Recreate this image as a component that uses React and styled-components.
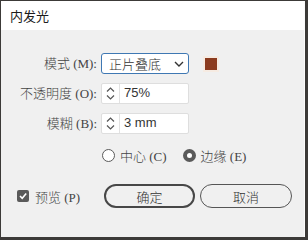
import styled, { createGlobalStyle } from 'styled-components';

const GlobalStyle = createGlobalStyle`
  html, body {
    margin: 0;
    padding: 0;
    background: #3c3a38;
  }
  body {
    width: 308px;
    height: 240px;
    overflow: hidden;
    font-family: "Liberation Serif", "Noto Sans CJK SC", serif;
    font-weight: 300;
  }
`;

const Dialog = styled.div`
  margin: 1px 0 0 1px;
  width: 304px;
  height: 236px;
  box-sizing: border-box;
  background: #f0f0f0;
  border-right: 1px solid #fbfbfb;
  display: flex;
  flex-direction: column;
`;

const TitleBar = styled.div`
  height: 29px;
  background: #fff;
  display: flex;
  align-items: center;
  padding-left: 9px;
  font: 400 13px "Noto Sans CJK SC", sans-serif;
  color: #1b1b1b;
`;

const Body = styled.div`
  padding-top: 23px;
  display: flex;
  flex-direction: column;
`;

const Form = styled.div`
  display: grid;
  grid-template-columns: 96px 88px auto;
  column-gap: 4px;
  row-gap: 9px;
  align-items: center;
`;

const Label = styled.div`
  text-align: right;
  font-size: 13px;
  color: #444;
  white-space: nowrap;
  line-height: 21px;
`;

const Select = styled.div`
  height: 21px;
  box-sizing: border-box;
  border: 1px solid #3f78b3;
  border-radius: 3px;
  background: #fff;
  display: flex;
  align-items: center;
  justify-content: space-between;
  padding: 0 4px 0 7px;
  font: 300 13px "Noto Sans CJK SC", sans-serif;
  color: #333;
`;

const Swatch = styled.div`
  margin-left: 10px;
  width: 16px;
  height: 16px;
  box-sizing: border-box;
  border: 2px solid #f6ebe2;
  background: ${({ color }) => color};
`;

const Spin = styled.div`
  height: 21px;
  box-sizing: border-box;
  border: 1px solid #dedede;
  border-radius: 2px;
  background: #fff;
  display: flex;
  align-items: stretch;
`;

const Arrows = styled.div`
  width: 17px;
  border-right: 1px solid #e2e2e2;
  display: flex;
  flex-direction: column;
  align-items: center;
  justify-content: center;
  gap: 3px;
`;

const Value = styled.div`
  padding-left: 4px;
  font: 400 13px "Liberation Sans", "Noto Sans CJK SC", sans-serif;
  color: #333;
  line-height: 17px;
`;

const RadioRow = styled.div`
  grid-column: 2 / span 2;
  margin-top: 5px;
  display: flex;
  align-items: center;
  height: 14px;
`;

const RadioItem = styled.label`
  display: flex;
  align-items: center;
  gap: 5px;
  margin-right: 15px;
  margin-left: 1px;
  font-size: 13px;
  color: #444;
  white-space: nowrap;
`;

const Radio = styled.span`
  width: 13px;
  height: 13px;
  box-sizing: border-box;
  border-radius: 50%;
  border: ${({ checked }) => (checked ? '4px solid #5a5a5a' : '1px solid #5a5a5a')};
  background: #fff;
`;

const Footer = styled.div`
  margin-top: 22px;
  padding-left: 16px;
  display: flex;
  align-items: center;
`;

const Preview = styled.label`
  width: 87px;
  display: flex;
  align-items: center;
  gap: 6px;
  font-size: 13px;
  color: #444;
`;

const Check = styled.span`
  width: 12px;
  height: 12px;
  border-radius: 2px;
  background: #5a5a5a;
  display: flex;
  align-items: center;
  justify-content: center;
`;

const Button = styled.button`
  width: ${({ w }) => w}px;
  height: 24px;
  margin-right: 5px;
  box-sizing: border-box;
  border: ${({ primary }) => (primary ? '2px solid #474747' : '1.5px solid #555')};
  border-radius: 12px;
  background: #f0f0f0;
  font: 300 13px "Noto Sans CJK SC", sans-serif;
  color: #333;
  padding: 0;
`;

const Chevron = ({ up }) => (
  <svg width="9" height="5" viewBox="0 0 9 5">
    <polyline
      points={up ? '1,4.5 4.5,1 8,4.5' : '1,0.5 4.5,4 8,0.5'}
      fill="none"
      stroke="#555"
      strokeWidth="1.2"
    />
  </svg>
);

const SpinField = ({ value }) => (
  <Spin>
    <Arrows>
      <Chevron up />
      <Chevron />
    </Arrows>
    <Value>{value}</Value>
  </Spin>
);

export default function App() {
  return (
    <>
      <GlobalStyle />
      <Dialog>
        <TitleBar>内发光</TitleBar>
        <Body>
          <Form>
            <Label>模式 (M):</Label>
            <Select>
              <span>正片叠底</span>
              <svg width="10" height="6" viewBox="0 0 10 6">
                <polyline points="1,1 5,5 9,1" fill="none" stroke="#333" strokeWidth="1.4" />
              </svg>
            </Select>
            <Swatch color="#8b3b1f" />

            <Label>不透明度 (O):</Label>
            <SpinField value="75%" />
            <span />

            <Label>模糊 (B):</Label>
            <SpinField value="3 mm" />
            <span />

            <span />
            <RadioRow>
              <RadioItem>
                <Radio />
                中心 (C)
              </RadioItem>
              <RadioItem>
                <Radio checked />
                边缘 (E)
              </RadioItem>
            </RadioRow>
          </Form>
          <Footer>
            <Preview>
              <Check>
                <svg width="10" height="10" viewBox="0 0 10 10">
                  <polyline points="2,5 4.2,7.3 8.2,2.5" fill="none" stroke="#fff" strokeWidth="1.6" />
                </svg>
              </Check>
              预览 (P)
            </Preview>
            <Button primary w={91}>确定</Button>
            <Button w={92}>取消</Button>
          </Footer>
        </Body>
      </Dialog>
    </>
  );
}
